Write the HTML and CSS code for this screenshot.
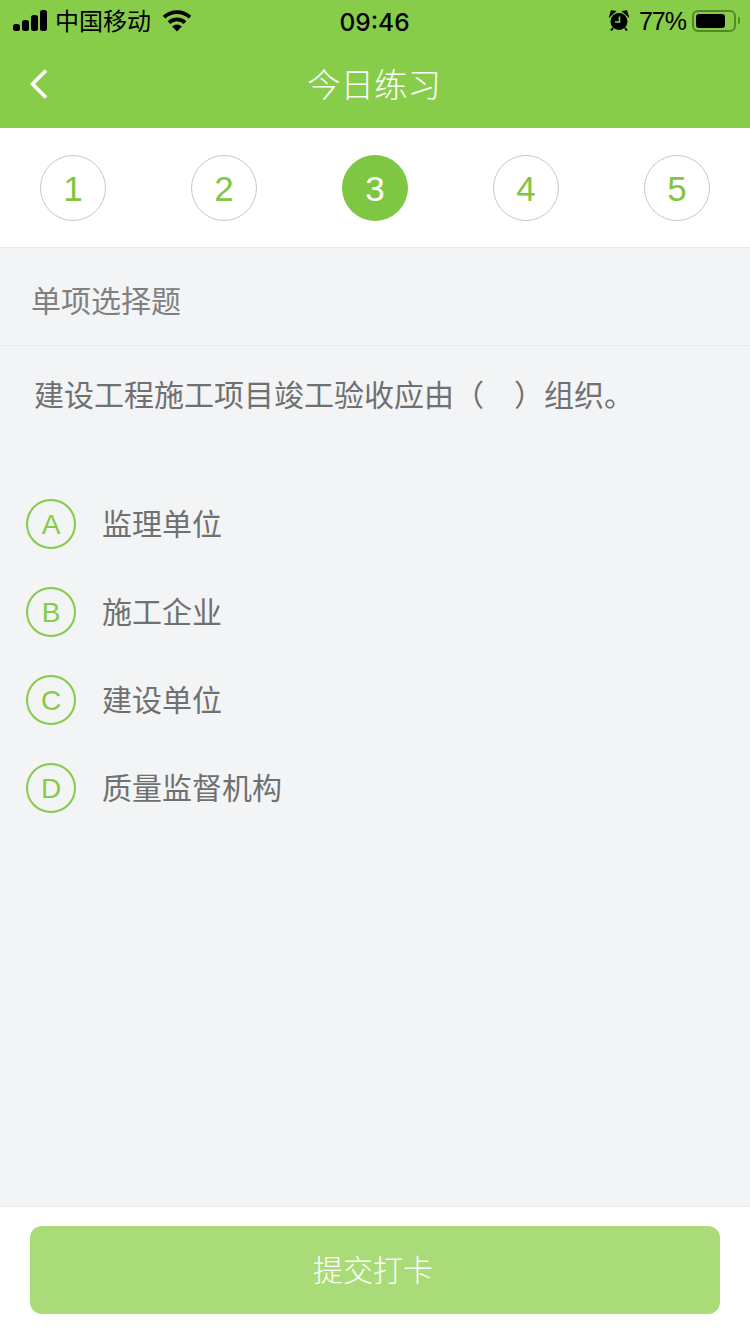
FILE: index.html
```html
<!DOCTYPE html>
<html lang="zh-CN">
<head>
    <meta charset="UTF-8">
    <meta name="viewport" content="width=device-width, initial-scale=1.0">
    <title>今日练习</title>
    <link rel="stylesheet" href="styles.css">
</head>
<body>
<div class="page">

    <!-- Header -->
    <header class="header">
        <div class="status-bar">
            <div class="status-left">
                <svg class="signal" width="34" height="21" viewBox="0 0 34 21">
                    <rect x="0" y="14" width="7" height="7" rx="2.500"/>
                    <rect x="9" y="10" width="7" height="11" rx="2.500"/>
                    <rect x="18" y="5" width="7" height="16" rx="2.500"/>
                    <rect x="27" y="0" width="7" height="21" rx="2.500"/>
                </svg>
                <span class="carrier">中国移动</span>
                <svg class="wifi" width="30" height="22" viewBox="0 0 30 22">
                    <path d="M15 21.500L10.200 16.400A7 7 0 0 1 19.800 16.400Z"/>
                    <path d="M7 12.600A11.500 11.500 0 0 1 23 12.600" fill="none" stroke="#000" stroke-width="3.800"/>
                    <path d="M2 7.200A19 19 0 0 1 28 7.200" fill="none" stroke="#000" stroke-width="3.800"/>
                </svg>
            </div>
            <div class="time">09:46</div>
            <div class="status-right">
                <svg class="alarm" width="20" height="21" viewBox="0 0 20 21">
                    <circle cx="10" cy="11.500" r="8.500"/>
                    <path d="M1 6L6 1.500 2.500 1ZM19 6L14 1.500 17.500 1Z" stroke="#000" stroke-width="1.500"/>
                    <path d="M4 18l-2 2.500M16 18l2 2.500" stroke="#000" stroke-width="2"/>
                    <path d="M10.500 6.500V12H6" fill="none" stroke="#87cd4a" stroke-width="1.600"/>
                </svg>
                <span class="battery-pct">77%</span>
                <div class="battery">
                    <div class="battery-level"></div>
                </div>
                <div class="battery-cap"></div>
            </div>
        </div>
        <div class="nav-bar">
            <svg class="back" width="20" height="32" viewBox="0 0 20 32">
                <path d="M17 2.500L3.500 16 17 29.500" fill="none" stroke="#fff" stroke-width="3.600"/>
            </svg>
            <h1 class="nav-title">今日练习</h1>
        </div>
    </header>

    <!-- Question numbers -->
    <div class="steps">
        <div class="step">1</div>
        <div class="step">2</div>
        <div class="step step-active">3</div>
        <div class="step">4</div>
        <div class="step">5</div>
    </div>

    <!-- Question -->
    <main class="content">
        <div class="question-type">单项选择题</div>
        <div class="question">建设工程施工项目竣工验收应由（<span class="blank"></span>）组织。</div>
        <div class="options">
            <div class="option"><span class="option-mark">A</span><span class="option-text">监理单位</span></div>
            <div class="option"><span class="option-mark">B</span><span class="option-text">施工企业</span></div>
            <div class="option"><span class="option-mark">C</span><span class="option-text">建设单位</span></div>
            <div class="option"><span class="option-mark">D</span><span class="option-text">质量监督机构</span></div>
        </div>
    </main>

    <!-- Submit -->
    <footer class="footer">
        <button class="submit">提交打卡</button>
    </footer>

</div>
</body>
</html>
```
FILE: styles.css
```css
* {
    box-sizing: border-box;
}

html, body {
    margin: 0;
    padding: 0;
}

body {
    font-family: "Noto Sans CJK SC", "Liberation Sans", sans-serif;
    background-color: #f3f4f6;
}

.page {
    width: 750px;
    height: 1334px;
    display: flex;
    flex-direction: column;
    overflow: hidden;
}

/* Header */
.header {
    height: 128px;
    background-color: #87cd4a;
    flex-shrink: 0;
}

.status-bar {
    height: 40px;
    padding: 0 10px 0 13px;
    display: grid;
    grid-template-columns: 1fr auto 1fr;
    align-items: center;
    color: #000;
}

.status-left,
.status-right {
    display: flex;
    align-items: center;
}

.status-right {
    justify-content: flex-end;
}

.signal {
    margin-right: 8px;
    margin-bottom: 2px;
}

.carrier {
    font-size: 24px;
    line-height: 40px;
    font-weight: 400;
    padding-bottom: 2px;
}

.wifi {
    margin-left: 11px;
}

.time {
    font-family: Inter, "Liberation Sans", sans-serif;
    font-size: 24.500px;
    font-weight: 500;
    line-height: 40px;
    padding: 2px 4px 0 0;
}

.alarm {
    margin-right: 10px;
    margin-bottom: 2px;
}

.battery-pct {
    font-family: "Liberation Sans", sans-serif;
    font-size: 25px;
    line-height: 40px;
    letter-spacing: -1px;
    margin-right: 6px;
}

.battery {
    width: 44px;
    height: 22px;
    border: 2px solid #4f8a2a;
    border-radius: 6px;
    padding: 2px;
    margin-bottom: 1px;
}

.battery-level {
    width: 29px;
    height: 14px;
    background-color: #000;
    border-radius: 3px;
}

.battery-cap {
    width: 2px;
    height: 7px;
    margin-left: 2px;
    margin-bottom: 1px;
    background-color: #4f8a2a;
    border-radius: 0 2px 2px 0;
}

.nav-bar {
    height: 88px;
    display: flex;
    align-items: center;
    justify-content: center;
    position: relative;
    padding-bottom: 3px;
}

.back {
    position: absolute;
    left: 29px;
    top: 28px;
}

.nav-title {
    margin: 0 2px 0 0;
    font-size: 33.500px;
    font-weight: 300;
    line-height: 44px;
    color: #fff;
}

/* Question numbers */
.steps {
    height: 120px;
    padding: 27px 40px 0;
    display: flex;
    justify-content: space-between;
    align-items: flex-start;
    background-color: #fff;
    border-bottom: 1px solid #e6e7e9;
    flex-shrink: 0;
}

.step {
    width: 66px;
    height: 66px;
    border: 1px solid #c8c8c8;
    border-radius: 50%;
    display: flex;
    align-items: center;
    justify-content: center;
    font-family: "Liberation Sans", sans-serif;
    font-size: 35px;
    padding-top: 1px;
    color: #7fc743;
}

.step-active {
    border-color: #7fc743;
    background-color: #7fc743;
    color: #fff;
}

/* Question */
.content {
    flex: 1;
    display: flex;
    flex-direction: column;
}

.question-type {
    height: 98px;
    padding: 4px 0 0 31px;
    border-bottom: 1px solid #e9eaec;
    display: flex;
    align-items: center;
    font-size: 30px;
    font-weight: 400;
    color: #808080;
}

.question {
    padding: 24px 0 0 34px;
    font-size: 30px;
    font-weight: 400;
    line-height: 46px;
    color: #707070;
}

.blank {
    display: inline-block;
    width: 30px;
}

.options {
    margin-top: 83px;
    padding-left: 26px;
    display: flex;
    flex-direction: column;
    gap: 38px;
}

.option {
    height: 50px;
    display: flex;
    align-items: center;
}

.option-mark {
    width: 50px;
    height: 50px;
    border: 2px solid #85cb48;
    border-radius: 50%;
    display: flex;
    align-items: center;
    justify-content: center;
    font-family: "Liberation Sans", sans-serif;
    font-size: 28px;
    padding-top: 2px;
    color: #85cb48;
    flex-shrink: 0;
}

.option-text {
    margin-left: 26px;
    padding-bottom: 4px;
    font-size: 30px;
    font-weight: 400;
    line-height: 44px;
    color: #707070;
}

/* Submit */
.footer {
    height: 128px;
    padding: 19px 30px 0;
    background-color: #fff;
    border-top: 1px solid #e8e9eb;
    flex-shrink: 0;
}

.submit {
    display: block;
    width: 100%;
    height: 88px;
    border: none;
    border-radius: 12px;
    background-color: #a9dc78;
    color: #fff;
    font-family: "Noto Sans CJK SC", sans-serif;
    font-size: 30px;
    font-weight: 300;
    padding: 0 4px 4px 0;
}
```
